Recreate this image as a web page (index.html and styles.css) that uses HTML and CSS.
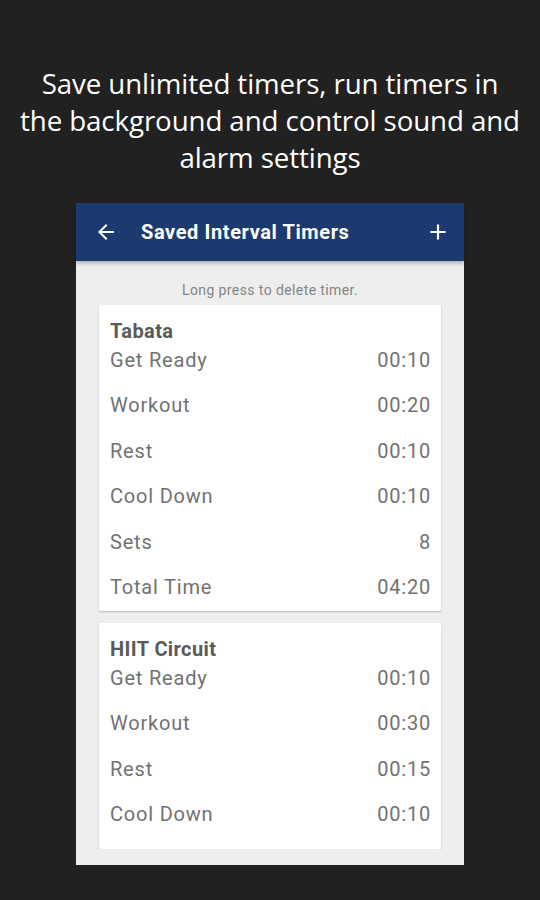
FILE: index.html
```html
<!DOCTYPE html>
<html lang="en">
<head>
    <meta charset="UTF-8">
    <meta name="viewport" content="width=device-width, initial-scale=1.0">
    <title>Saved Interval Timers</title>
    <link rel="stylesheet" href="styles.css">
</head>
<body>
    <h1 class="promo">Save unlimited timers, run timers in<br>the background and control sound and<br>alarm settings</h1>
    <div class="screen">
        <div class="appbar">
            <svg class="icon-back" viewBox="0 0 24 24"><path d="M20 11H7.83l5.59-5.59L12 4l-8 8 8 8 1.41-1.41L7.83 13H20v-2z"/></svg>
            <span class="appbar-title">Saved Interval Timers</span>
            <svg class="icon-add" viewBox="0 0 24 24"><path d="M19 13h-6v6h-2v-6H5v-2h6V5h2v6h6v2z"/></svg>
        </div>
        <div class="content">
            <p class="hint">Long press to delete timer.</p>
            <div class="list">
                <div class="card">
                    <div class="card-title">Tabata</div>
                    <div class="row"><span>Get Ready</span><span>00:10</span></div>
                    <div class="row"><span>Workout</span><span>00:20</span></div>
                    <div class="row"><span>Rest</span><span>00:10</span></div>
                    <div class="row"><span>Cool Down</span><span>00:10</span></div>
                    <div class="row"><span>Sets</span><span>8</span></div>
                    <div class="row"><span>Total Time</span><span>04:20</span></div>
                </div>
                <div class="card card-cut">
                    <div class="card-title">HIIT Circuit</div>
                    <div class="row"><span>Get Ready</span><span>00:10</span></div>
                    <div class="row"><span>Workout</span><span>00:30</span></div>
                    <div class="row"><span>Rest</span><span>00:15</span></div>
                    <div class="row"><span>Cool Down</span><span>00:10</span></div>
                </div>
            </div>
        </div>
    </div>
</body>
</html>
```

FILE: styles.css
```css
body {
    margin: 0;
    height: 900px;
    background: #212121;
    display: flex;
    flex-direction: column;
    align-items: center;
    overflow: hidden;
}
.promo {
    margin: 65px 0 27px;
    font-family: "Open Sans", sans-serif;
    font-weight: 400;
    font-size: 27.7px;
    line-height: 37px;
    letter-spacing: -0.1px;
    color: #fff;
    text-align: center;
    white-space: nowrap;
}
.screen {
    width: 388px;
    height: 662px;
    display: flex;
    flex-direction: column;
    background: #eeeeee;
    font-family: Roboto, sans-serif;
}
.appbar {
    height: 58px;
    flex-shrink: 0;
    background: #1d3a70;
    display: flex;
    align-items: center;
    padding: 0 18px;
    box-shadow: 0 2px 4px rgba(0, 0, 0, 0.3);
    position: relative;
}
.icon-back {
    width: 24px;
    height: 24px;
    fill: #fff;
}
.appbar-title {
    flex: 1;
    margin-left: 23px;
    color: #fff;
    font-size: 20px;
    font-weight: 700;
    letter-spacing: 0.6px;
}
.icon-add {
    width: 26px;
    height: 26px;
    fill: #fff;
    margin-right: -5px;
}
.content {
    flex: 1;
    display: flex;
    flex-direction: column;
    padding: 20px 23px 16px;
    min-height: 0;
}
.hint {
    margin: 0 0 6px;
    font-size: 14px;
    line-height: 18px;
    letter-spacing: 0.4px;
    color: #858585;
    text-align: center;
}
.list {
    flex: 1;
    overflow: hidden;
    display: flex;
    flex-direction: column;
    gap: 12px;
    margin: 0 -2px;
    padding: 0 2px;
}
.card {
    flex-shrink: 0;
    background: #fff;
    border-radius: 2px;
    box-shadow: 0 1px 2px rgba(0, 0, 0, 0.22);
    padding: 14px 10px 12px 11px;
    display: flex;
    flex-direction: column;
    gap: 21.4px;
}
.card-cut {
    padding-bottom: 23px;
}
.card-title {
    font-size: 20px;
    font-weight: 700;
    line-height: 24px;
    letter-spacing: 0.4px;
    color: #5a5a5a;
    margin-bottom: -16.4px;
}
.row {
    display: flex;
    justify-content: space-between;
    font-size: 20px;
    line-height: 24px;
    letter-spacing: 0.8px;
    color: #727272;
}
```
